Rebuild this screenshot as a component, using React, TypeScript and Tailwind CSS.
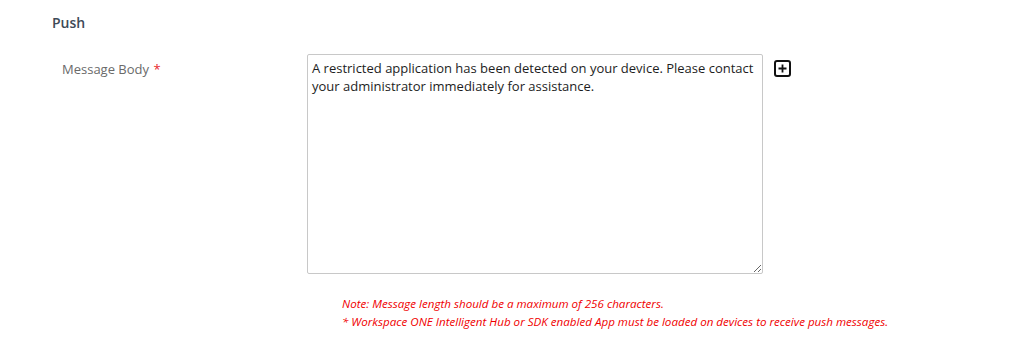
import React from "react";

export default function App() {
  return (
    <div className="w-[1016px] h-[359px] bg-white font-['Open_Sans',sans-serif]">
      {/* Section header */}
      <div className="pl-[52px] pt-[13px]">
        <h2 className="text-[14px] leading-[20px] font-semibold text-[#3e4a57]">Push</h2>
      </div>

      {/* Message body row */}
      <div className="flex mt-[21px]">
        <div className="w-[307px] pl-[62px] pt-[2px]">
          <label className="text-[13px] leading-[18px] text-[#6a6a6a]">
            Message Body <span className="text-[#e8262b] ml-[1px]">*</span>
          </label>
        </div>
        <textarea
          className="w-[456px] h-[220px] border border-[#c8c8c8] rounded-[2px] px-[4px] pt-[4px] text-[13px] leading-[18px] text-[#1d1d1d] outline-none resize-y"
          defaultValue="A restricted application has been detected on your device. Please contact your administrator immediately for assistance."
        />
        <div className="pl-[11px] pt-[6px]">
          <button className="w-[17px] h-[17px] border-2 border-[#111] rounded-[3px] flex items-center justify-center">
            <svg width="9" height="9" viewBox="0 0 9 9">
              <path d="M4.5 0.5v8M0.5 4.5h8" stroke="#111" strokeWidth="1.8" />
            </svg>
          </button>
        </div>
      </div>

      {/* Notes */}
      <div className="pl-[342px] pt-[21px] text-[11.6px] leading-[18px] italic text-[#f00000]">
        <p>Note: Message length should be a maximum of 256 characters.</p>
        <p>* Workspace ONE Intelligent Hub or SDK enabled App must be loaded on devices to receive push messages.</p>
      </div>
    </div>
  );
}
